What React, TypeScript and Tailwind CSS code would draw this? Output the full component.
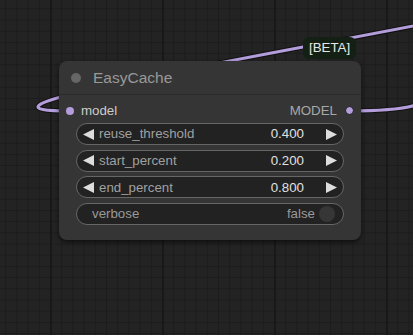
import React from "react"

const font = "font-['Liberation_Sans',Arial,sans-serif]"

function Arrow({ dir }: { dir: "left" | "right" }) {
    return (
        <svg width="11" height="11" viewBox="0 0 11 11" className="shrink-0">
            {dir === "left" ? (
                <polygon points="11,0 11,11 0,5.5" fill="#dddddd" />
            ) : (
                <polygon points="0,0 0,11 11,5.5" fill="#dddddd" />
            )}
        </svg>
    )
}

function NumberWidget({ label, value }: { label: string; value: string }) {
    return (
        <div className="h-[22px] rounded-full border border-[#666] bg-[#222] flex items-center pl-[6px] pr-[6px]">
            <Arrow dir="left" />
            <span className="ml-[5px] text-[#a0a0a0] text-[13.3px] leading-none">{label}</span>
            <span className="ml-auto text-[#e0e0e0] text-[13.3px] leading-none">{value}</span>
            <span className="ml-[22px]"><Arrow dir="right" /></span>
        </div>
    )
}

function ToggleWidget({ label, value }: { label: string; value: boolean }) {
    return (
        <div className="h-[22px] rounded-full border border-[#666] bg-[#222] flex items-center pl-[15px] pr-[8px]">
            <span className="text-[#999] text-[13.3px] leading-none">{label}</span>
            <span className="ml-auto text-[#999] text-[13.3px] leading-none">{value ? "true" : "false"}</span>
            <span className="ml-[4px] w-[16px] h-[16px] rounded-full bg-[#363636]" />
        </div>
    )
}

export default function App() {
    return (
        <main className={`relative w-[413px] h-[335px] overflow-hidden bg-[#232323] ${font}`}>
            {/* canvas: grid + links */}
            <svg className="absolute inset-0" width="413" height="335">
                <defs>
                    <pattern id="minor" x="5.2" y="8.3" width="11.2" height="11.2" patternUnits="userSpaceOnUse">
                        <path d="M0 0.5 H11.2 M0.5 0 V11.2" stroke="#1c1c1c" strokeWidth="1" fill="none" />
                    </pattern>
                    <pattern id="major" x="50" y="8.3" width="112" height="112" patternUnits="userSpaceOnUse">
                        <path d="M1 0 V112" stroke="#181818" strokeWidth="2" fill="none" />
                    </pattern>
                </defs>
                <rect width="413" height="335" fill="url(#minor)" />
                <rect width="413" height="335" fill="url(#major)" />

                <path d="M70 111 C -140 111, 760 -20, 560 -20" stroke="#111" strokeWidth="5" fill="none" />
                <path d="M70 111 C -140 111, 760 -20, 560 -20" stroke="#b39ddb" strokeWidth="3" fill="none" />
                <path d="M350 111 C 480 111, 400 80, 520 40" stroke="#111" strokeWidth="5" fill="none" />
                <path d="M350 111 C 480 111, 400 80, 520 40" stroke="#b39ddb" strokeWidth="3" fill="none" />
            </svg>

            {/* node */}
            <div className="absolute left-[59px] top-[61px] w-[302px] rounded-[8px] bg-[#353535] shadow-[0_2px_4px_rgba(0,0,0,0.6)]">
                <div className="h-[34px] flex items-center pl-[12px] border-b border-[#2b2b2b]">
                    <span className="w-[10px] h-[10px] rounded-full bg-[#666]" />
                    <span className="ml-[12px] text-[15.5px] text-[#999] leading-none">EasyCache</span>
                </div>

                <div className="h-[28px] pt-[3px] flex items-center px-[7px]">
                    <span className="w-[8px] h-[8px] rounded-full bg-[#b39ddb]" />
                    <span className="ml-[7px] text-[13.3px] text-[#cccccc] leading-none">model</span>
                    <span className="ml-auto text-[13.3px] text-[#a8a8a8] leading-none">MODEL</span>
                    <span className="ml-[8px] w-[9px] h-[9px] rounded-full bg-[#b39ddb] border border-[#1a1a1a]" />
                </div>

                <div className="flex flex-col gap-[4.6px] px-[17px] pb-[15px]">
                    <NumberWidget label="reuse_threshold" value="0.400" />
                    <NumberWidget label="start_percent" value="0.200" />
                    <NumberWidget label="end_percent" value="0.800" />
                    <ToggleWidget label="verbose" value={false} />
                </div>
            </div>

            {/* badge */}
            <div className="absolute left-[303px] top-[37px] h-[22px] px-[6px] rounded-[6px] bg-[#142014] flex items-center">
                <span className="text-[13.3px] text-[#e8e8e8] leading-none">[BETA]</span>
            </div>
        </main>
    )
}
